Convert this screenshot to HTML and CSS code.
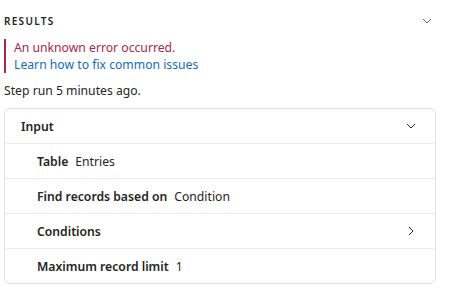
FILE: index.html
```html
<!DOCTYPE html>
<html lang="en">
  <head>
    <meta charset="UTF-8" />
    <title>Results</title>
    <link rel="stylesheet" href="styles.css">
  </head>
  <body>

    <div class="panel">

      <div class="results-header">
        <span class="results-title">RESULTS</span>
        <svg class="chev" width="10" height="6" viewBox="0 0 10 6"><path d="M1 1 L5 5 L9 1" fill="none" stroke="#616161" stroke-width="1"/></svg>
      </div>

      <div class="error-box">
        <p class="error-msg">An unknown error occurred.</p>
        <a class="error-link" href="#">Learn how to fix common issues</a>
      </div>

      <p class="step-time">Step run 5 minutes ago.</p>

      <div class="card">
        <div class="card-header">
          <span>Input</span>
          <svg class="chev" width="10" height="6" viewBox="0 0 10 6"><path d="M1 1 L5 5 L9 1" fill="none" stroke="#242424" stroke-width="1"/></svg>
        </div>

        <div class="row">
          <span class="label">Table</span>
          <span class="value">Entries</span>
        </div>

        <div class="row">
          <span class="label">Find records based on</span>
          <span class="value">Condition</span>
        </div>

        <div class="row">
          <span class="label">Conditions</span>
          <svg class="chev-right" width="6" height="10" viewBox="0 0 6 10"><path d="M1 1 L5 5 L1 9" fill="none" stroke="#242424" stroke-width="1"/></svg>
        </div>

        <div class="row">
          <span class="label">Maximum record limit</span>
          <span class="value">1</span>
        </div>
      </div>

    </div>

  </body>
</html>
```

FILE: styles.css
```css
*{
  margin: 0;
  padding: 0;
  box-sizing: border-box;
}

body{
  font-family: "Segoe UI", "Noto Sans", sans-serif;
  font-size: 12.2px;
  color: #242424;
  background: #ffffff;
}

.panel{
  width: 436px;
  padding-left: 4px;
}

.results-header{
  display: flex;
  justify-content: space-between;
  align-items: center;
  height: 17px;
  margin-top: 12px;
  padding-right: 4px;
}

.results-title{
  font-size: 10px;
  font-weight: 600;
  letter-spacing: 1.3px;
}

.error-box{
  margin-top: 10px;
  border-left: 2px solid #a8264a;
  padding-left: 8px;
  line-height: 17px;
}

.error-msg{
  color: #a8264a;
}

.error-link{
  color: #0f6cbd;
  text-decoration: none;
}

.step-time{
  margin-top: 9px;
  line-height: 18px;
}

.card{
  margin-top: 8px;
  border: 1px solid #e0e0e0;
  border-radius: 6px;
}

.card-header{
  display: flex;
  justify-content: space-between;
  align-items: center;
  height: 34px;
  padding: 0 19px 0 16px;
  font-weight: 600;
}

.row{
  display: flex;
  align-items: center;
  gap: 7px;
  height: 35px;
  padding: 0 21px 0 32px;
  border-top: 1px solid #ebebeb;
}

.label{
  font-weight: 600;
}

.chev-right{
  margin-left: auto;
}
```
